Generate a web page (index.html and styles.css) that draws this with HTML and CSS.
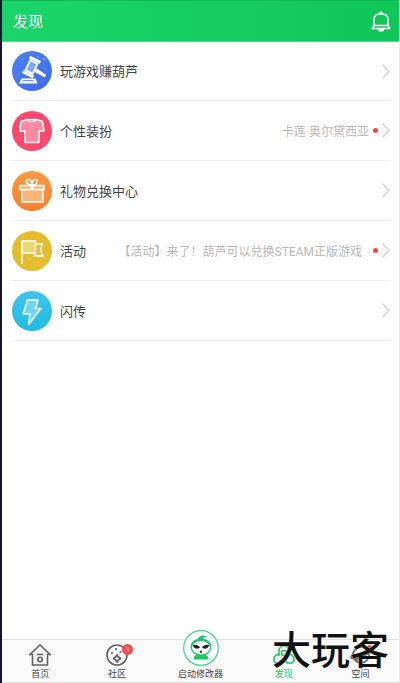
FILE: index.html
```html
<!DOCTYPE html>
<html lang="zh-CN">
<head>
<meta charset="utf-8">
<meta name="viewport" content="width=device-width, initial-scale=1">
<title>发现</title>
<link rel="stylesheet" href="styles.css">
</head>
<body>
<div class="app">
  <header class="topbar">
    <h1 class="title">发现</h1>
    <button class="bell" type="button" aria-label="通知">
      <svg width="20" height="22" viewBox="0 0 20 22" fill="none" stroke="#fff" stroke-width="1.5" stroke-linejoin="round">
        <path d="M3 14.500V8C3 5 5.500 3 8 3h4c2.500 0 5 2 5 5v6.500M3 14.500h14M3 14.500l-1.800 3h17.600l-1.800-3"/>
        <path d="M8.500 3c0-2.500 3-2.500 3 0" fill="#fff"/>
        <path d="M7.500 18.500c.5 2 4.500 2 5 0z" fill="#fff"/>
      </svg>
    </button>
  </header>

  <main class="list">
    <a class="row" href="#games">
      <svg class="icon" viewBox="0 0 40 40">
        <defs><linearGradient id="blue" x2="1" y2="1"><stop stop-color="#4b83f0"/><stop offset="1" stop-color="#4169ef"/></linearGradient></defs>
        <circle cx="20" cy="20" r="20" fill="url(#blue)"/>
        <g fill="#8fb0f8"><circle cx="10" cy="8" r=".6"/><circle cx="26" cy="6" r=".7"/><circle cx="32" cy="8" r="1"/><circle cx="33" cy="17" r=".6"/><circle cx="5" cy="15" r=".6"/><circle cx="7" cy="24" r=".6"/><circle cx="30" cy="31" r=".6"/></g>
        <g transform="translate(19.500 16) rotate(26)">
          <path d="M5-1 16.500.5v3L5 3z" fill="#fff"/>
          <path d="M-4-5.500h8v11h-8z" fill="#7fa5f7" stroke="#fff" stroke-width="1.800"/>
          <path d="M-6-9.500h12v3H-6zM-6 6.500h12v3H-6z" fill="#fff"/>
        </g>
        <path d="M9.500 27.500h14l2 5H7z" fill="#fff"/><path d="M11 29h10.500l.5 1.200H10.500z" fill="#7398f4"/>
      </svg>
      <span class="label">玩游戏赚葫芦</span>
      <svg class="chevron" viewBox="0 0 8 15"><path d="M.7.7 7 7.500.7 14.300"/></svg>
    </a>
    <a class="row" href="#style">
      <svg class="icon" viewBox="0 0 40 40">
        <circle cx="20" cy="20" r="20" fill="#fb4a6d"/>
        <path d="M15 8.500 9 10.500 7.800 19l1 1.500 4.200-.5v11.500h14V20l4 .5 1-1.500-1.500-8.500-6-2c-2 2.500-7.500 2.500-9.500 0z" fill="#fd8ca3" stroke="#fff" stroke-width="1.500" stroke-linejoin="round"/>
        <path d="M15.500 8.500h8.500" fill="none" stroke="#fff" stroke-width="1.300"/>
      </svg>
      <span class="label">个性装扮</span>
      <span class="note">卡莲·奥尔黛西亚</span>
      <i class="dot"></i>
      <svg class="chevron" viewBox="0 0 8 15"><path d="M.7.7 7 7.500.7 14.300"/></svg>
    </a>
    <a class="row" href="#gifts">
      <svg class="icon" viewBox="0 0 40 40">
        <defs><linearGradient id="orange" x2="0" y2="1"><stop stop-color="#fb9a41"/><stop offset="1" stop-color="#f5812d"/></linearGradient></defs>
        <circle cx="20" cy="20" r="20" fill="url(#orange)"/>
        <g fill="#fbb478" stroke="#fff" stroke-width="1.500" stroke-linejoin="round">
          <path d="M10 18.500h21V31H10z"/><path d="M8 14.500h24v4H8z"/>
          <path d="M20 14c-6 0-7-5-4-5.500 2.500-.3 4 3 4 5.500zM20 14c6 0 6.500-5 3.500-5.500-2.500-.3-3.500 3-3.500 5.500z" fill="none"/>
        </g>
        <path d="M18.500 14v5h3.500v-5z" fill="#fff"/>
      </svg>
      <span class="label">礼物兑换中心</span>
      <svg class="chevron" viewBox="0 0 8 15"><path d="M.7.7 7 7.500.7 14.300"/></svg>
    </a>
    <a class="row" href="#events">
      <svg class="icon" viewBox="0 0 40 40">
        <circle cx="20" cy="20" r="20" fill="#e3bd2e"/>
        <g fill="#f2de86"><circle cx="11" cy="6" r=".6"/><circle cx="27" cy="7" r=".7"/><circle cx="5" cy="20" r=".6"/><circle cx="17" cy="28" r=".8"/><circle cx="26" cy="31" r=".7"/><circle cx="33" cy="27" r=".6"/></g>
        <g stroke="#fff" stroke-width="1.400" stroke-linejoin="miter">
          <path d="M23.500 13h7l-2 6 2.500 6h-8.500v-2.500z" fill="#dfbf45"/>
          <path d="M10 10h13.500v12H10z" fill="#efd478"/>
          <path d="M10 9.500V33" fill="none"/>
        </g>
      </svg>
      <span class="label">活动</span>
      <span class="note note-long">【活动】来了！葫芦可以兑换STEAM正版游戏</span>
      <i class="dot"></i>
      <svg class="chevron" viewBox="0 0 8 15"><path d="M.7.7 7 7.500.7 14.300"/></svg>
    </a>
    <a class="row" href="#transfer">
      <svg class="icon" viewBox="0 0 40 40">
        <defs><linearGradient id="cyan" x2="0" y2="1"><stop stop-color="#3dc5ea"/><stop offset="1" stop-color="#20bce3"/></linearGradient></defs>
        <circle cx="20" cy="20" r="20" fill="url(#cyan)"/>
        <path d="M15.500 9H26l-2.500 8.500h5.500L16.500 33.500 18 23h-7z" fill="#6ed8f2" stroke="#fff" stroke-width="1.500" stroke-linejoin="round"/>
      </svg>
      <span class="label">闪传</span>
      <svg class="chevron" viewBox="0 0 8 15"><path d="M.7.7 7 7.500.7 14.300"/></svg>
    </a>
  </main>

  <nav class="tabs">
    <a class="tab" href="#home">
      <svg width="22" height="22" viewBox="0 0 22 22" fill="none" stroke="#626262" stroke-width="1.600">
        <path d="M1 10.500h2.500V21h15V10.500H21L11 1zM7.500 10.500h7"/><circle cx="11" cy="15.500" r="2.200"/>
      </svg>
      <span>首页</span>
    </a>
    <a class="tab" href="#community">
      <span class="badged">
        <svg width="22" height="22" viewBox="0 0 22 22" fill="none" stroke="#626262" stroke-width="1.600">
          <circle cx="11" cy="11" r="10"/><path d="M11 10.500q.8 3.200 4 4-3.200.8-4 4-.8-3.200-4-4 3.200-.8 4-4z"/>
          <g fill="#626262" stroke="none"><circle cx="6" cy="9" r="1.100"/><circle cx="10" cy="5" r="1.100"/><circle cx="14.500" cy="8" r="1.100"/></g>
        </svg>
        <b class="badge">1</b>
      </span>
      <span>社区</span>
    </a>
    <a class="tab" href="#launch">
      <svg class="launch" width="36" height="36" viewBox="0 0 36 36">
        <circle cx="18" cy="18" r="17.300" fill="#fff" stroke="#3fd68a" stroke-width="1.200"/>
        <path d="M15 9c1-3 4-4.500 9-2.500l-4 1.500c1 .5 1 1 1 1.500z" fill="#19c866"/>
        <path d="M14 24.500h8c2 .5 3.500 2.500 3.500 5h-15c0-2.500 1.500-4.500 3.500-5z" fill="#19c866"/>
        <ellipse cx="18" cy="17" rx="10.500" ry="8.800" fill="#19c866"/>
        <ellipse cx="18" cy="17.800" rx="9" ry="6.800" fill="#fff"/>
        <path d="M10 15c3-.5 6 .5 7 2.500-2 2-6.500 1.500-7-2.500zM26 15c-3-.5-6 .5-7 2.500 2 2 6.500 1.500 7-2.500z" fill="#222"/>
        <ellipse cx="18" cy="21.800" rx="1" ry="1.400" fill="#333"/>
      </svg>
      <span>启动修改器</span>
    </a>
    <a class="tab tab-active" href="#discover">
      <span class="badged">
        <svg width="22" height="22" viewBox="0 0 22 22" fill="none" stroke="#19c866" stroke-width="1.600">
          <path d="M6 12V7c0-7 10-7 10 0v5M6 10c-6 1-6 8-3 9h5l3-4 3 4h5c3-1 3-8-3-9"/><circle cx="11" cy="9" r="2.500"/>
        </svg>
        <i class="dot tab-dot"></i>
      </span>
      <span>发现</span>
    </a>
    <a class="tab" href="#space">
      <span class="badged">
        <svg width="22" height="22" viewBox="0 0 22 22" fill="none" stroke="#626262" stroke-width="1.600">
          <circle cx="11" cy="11" r="8"/><path d="M4 9c-8 7 2 7 10 3s10-9 3-7M6 17l10-8"/>
        </svg>
        <i class="dot tab-dot"></i>
      </span>
      <span>空间</span>
    </a>
  </nav>
  <div class="watermark">大玩客</div>
</div>
</body>
</html>
```
FILE: styles.css
```css
* {
  box-sizing: border-box;
}

body {
  margin: 0;
  font-family: Roboto, "Noto Sans CJK SC", sans-serif;
  color: #444;
  background: #fff;
}

a {
  color: inherit;
  text-decoration: none;
}

svg {
  display: block;
  flex: none;
}

.app {
  position: relative;
  display: flex;
  flex-direction: column;
  min-height: 100vh;
  border-left: 2px solid #17142e;
  border-right: 1px solid #ececec;
}

.topbar {
  display: flex;
  align-items: center;
  justify-content: space-between;
  height: 42px;
  padding: 2px 8px 0 11px;
  background: linear-gradient(90deg, #1bd56a, #0fc658);
  border-top: 1px solid #12b955;
  border-bottom: 1px solid #52d98a;
}

.title {
  margin: 0;
  font-size: 15px;
  font-weight: 400;
  line-height: 20px;
  color: #fff;
}

.bell {
  padding: 0;
  border: 0;
  background: none;
}

.list {
  flex: 1;
  padding: 0 9px 0 10px;
}

.row {
  display: flex;
  align-items: center;
  height: 60px;
  border-bottom: 1px solid #eee;
}

.row:first-child {
  height: 59px;
}

.icon {
  width: 40px;
  height: 40px;
  margin-right: 8px;
}

.label,
.note {
  padding-top: 2px;
  line-height: 20px;
  white-space: nowrap;
}

.label {
  flex: 1;
  font-size: 13px;
}

.note {
  margin-right: 4px;
  font-size: 12px;
  color: #b8b8b8;
}

.note-long {
  margin-right: 11px;
}

.dot {
  width: 5px;
  height: 5px;
  border-radius: 50%;
  background: #e94b3c;
}

.chevron {
  width: 8px;
  height: 15px;
  margin-left: 4px;
  fill: none;
  stroke: #d0d0d0;
  stroke-width: 1.3;
}

.tabs {
  display: grid;
  grid-template-columns: 1fr 1fr 90px 1fr 1fr;
  height: 44px;
  background: #fafafa;
  border-top: 1px solid #e2e2e2;
  border-bottom: 1px solid #dcdcdc;
}

.tab {
  display: flex;
  flex-direction: column;
  align-items: center;
  justify-content: flex-end;
  gap: 2px;
  padding-bottom: 2px;
  font-size: 9px;
  line-height: 12px;
}

.launch {
  margin-top: -12px;
}

.tab-active {
  color: #19c866;
}

.badged {
  position: relative;
}

.badge {
  position: absolute;
  top: 0;
  right: -5px;
  width: 11px;
  height: 11px;
  border-radius: 50%;
  background: #f64b55;
  color: #fff;
  font-size: 8px;
  font-weight: 400;
  line-height: 11px;
  text-align: center;
}

.tab-dot {
  position: absolute;
  top: 1px;
  right: 0;
}

.watermark {
  position: absolute;
  right: 10px;
  bottom: 16px;
  font-size: 39px;
  font-weight: 500;
  line-height: 32px;
  color: #111;
  text-shadow: 0 0 1px #fff;
  pointer-events: none;
}
```
